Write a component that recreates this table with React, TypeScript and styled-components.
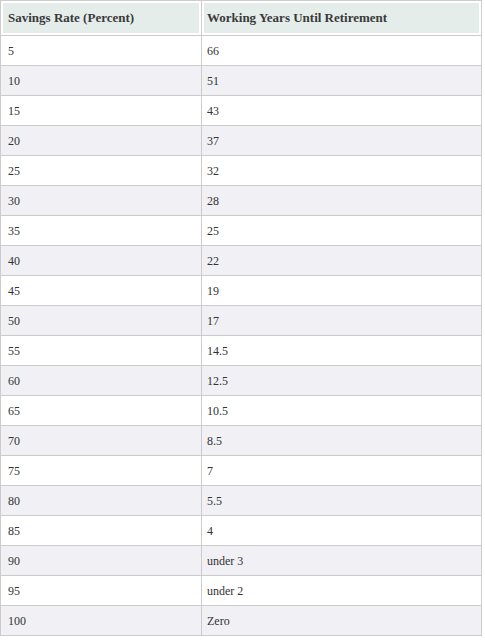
import React from "react";
import styled, { createGlobalStyle } from "styled-components";

const Global = createGlobalStyle`
  html, body { margin: 0; padding: 0; background: #ffffff; }
  body { font-family: "Liberation Serif", Georgia, serif; color: #333; }
`;

const Table = styled.div`
  width: 482px;
  box-sizing: border-box;
  border: 1px solid #cccccc;
  border-bottom: none;
`;

const Row = styled.div<{ $alt?: boolean }>`
  display: grid;
  grid-template-columns: 200px 1fr;
  background: ${(p) => (p.$alt ? "#f0f0f5" : "#ffffff")};
  border-bottom: 1px solid #cccccc;
`;

const HeadCell = styled.div`
  height: 34px;
  box-sizing: border-box;
  display: flex;
  align-items: center;
  padding-left: 7px;
  background: #e5edeb;
  box-shadow: inset 0 0 0 2px #ffffff;
  font-weight: bold;
  font-size: 13px;
  color: #3a3a3a;
  & + & {
    border-left: 1px solid #cccccc;
    padding-left: 5px;
  }
`;

const Cell = styled.div`
  height: 29px;
  box-sizing: border-box;
  display: flex;
  align-items: center;
  padding-left: 7px;
  padding-top: 2px;
  font-size: 12px;
  color: #333333;
  & + & {
    border-left: 1px solid #cccccc;
    padding-left: 5px;
  }
`;

const data: [string, string][] = [
  ["5", "66"],
  ["10", "51"],
  ["15", "43"],
  ["20", "37"],
  ["25", "32"],
  ["30", "28"],
  ["35", "25"],
  ["40", "22"],
  ["45", "19"],
  ["50", "17"],
  ["55", "14.5"],
  ["60", "12.5"],
  ["65", "10.5"],
  ["70", "8.5"],
  ["75", "7"],
  ["80", "5.5"],
  ["85", "4"],
  ["90", "under 3"],
  ["95", "under 2"],
  ["100", "Zero"],
];

export default function App() {
  return (
    <>
      <Global />
      <Table>
        <Row>
          <HeadCell>Savings Rate (Percent)</HeadCell>
          <HeadCell>Working Years Until Retirement</HeadCell>
        </Row>
        {data.map(([a, b], i) => (
          <Row key={a} $alt={i % 2 === 1}>
            <Cell>{a}</Cell>
            <Cell>{b}</Cell>
          </Row>
        ))}
      </Table>
    </>
  );
}
